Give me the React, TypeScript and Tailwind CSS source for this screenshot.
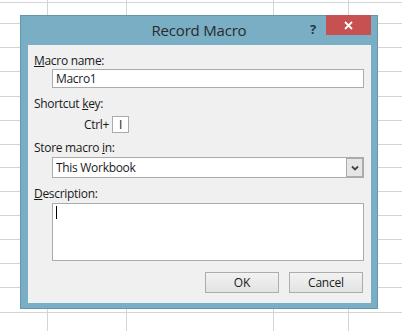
import React from 'react';

const font = { fontFamily: '"Open Sans", "Noto Sans", sans-serif' };

// sheet grid behind the dialog
const rowHeights = [3, 21, 24, 24, 25, 24, 24, 23, 24, 24, 24, 24, 24, 25, 30];
const colWidths = [48, 79, 147, 75, 60];

function SheetGrid() {
  return (
    <div className="flex flex-col">
      {rowHeights.map((h, r) => (
        <div key={r} className="flex border-b border-[#d4d4d4]" style={{ height: h }}>
          {colWidths.map((w, c) => (
            <div key={c} className="shrink-0 border-r border-[#d4d4d4]" style={{ width: w }} />
          ))}
        </div>
      ))}
    </div>
  );
}

function Label({ children }: { children: React.ReactNode }) {
  return (
    <div className="h-4 pl-[6px] text-[12px] leading-4 tracking-[-0.3px] text-[#1a1a1a]">
      {children}
    </div>
  );
}

function DialogButton({ children }: { children: React.ReactNode }) {
  return (
    <button className="flex h-[21px] w-[74px] items-center justify-center border border-[#adadad] bg-gradient-to-b from-[#f2f2f2] to-[#e3e3e3] text-[12px] tracking-[-0.2px] text-[#1a1a1a]">
      {children}
    </button>
  );
}

export default function App() {
  return (
    <div className="relative h-[331px] w-[402px] overflow-hidden bg-white" style={font}>
      <SheetGrid />

      {/* Record Macro dialog */}
      <div className="absolute left-[20px] top-[15px] flex h-[294px] w-[358px] flex-col border border-[#6497ac] bg-[#79aec4] pb-[5px]">
        <div className="relative flex h-[29px] shrink-0 items-center justify-center">
          <span className="text-[15px] tracking-[-0.2px] text-[#2b2b2b]">Record Macro</span>
          <span className="absolute left-[289px] top-[4px] text-[13px] font-bold text-[#21394a]">?</span>
          <div className="absolute left-[305px] top-[-1px] flex h-[20px] w-[45px] items-center justify-center bg-[#c75050]">
            <svg width="9" height="9" viewBox="0 0 9 9">
              <path d="M1 1 L8 8 M8 1 L1 8" stroke="white" strokeWidth="1.8" />
            </svg>
          </div>
        </div>

        <div className="ml-[7px] mr-[6px] flex h-[258px] flex-col bg-[#f0f0f0] pb-[10px] pt-[8px]">
          <Label>
            <span className="underline">M</span>acro name:
          </Label>
          <div className="ml-[24px] flex h-[19px] w-[312px] items-center border border-[#ababab] bg-white pl-[3px] text-[12px] tracking-[-0.3px] text-[#1a1a1a]">
            Macro1
          </div>

          <div className="mt-[8px]">
            <Label>
              Shortcut <span className="underline">k</span>ey:
            </Label>
          </div>
          <div className="ml-[56px] mt-[4px] flex h-[17px] items-center gap-[3px] text-[12px] tracking-[-0.3px] text-[#1a1a1a]">
            <span>Ctrl+</span>
            <div className="flex h-[17px] w-[17px] items-center justify-center border border-[#ababab] bg-white">
              I
            </div>
          </div>

          <div className="mt-[7px]">
            <Label>
              Store macro <span className="underline">i</span>n:
            </Label>
          </div>
          <div className="ml-[24px] mt-[1px] flex h-[21px] w-[312px] items-center border border-[#ababab] bg-white pl-[3px] text-[12px] tracking-[-0.3px] text-[#1a1a1a]">
            <span className="flex-1">This Workbook</span>
            <div className="flex h-[19px] w-[17px] items-center justify-center border border-[#acacac] bg-[#e6e6e6]">
              <svg width="8" height="6" viewBox="0 0 8 6">
                <path d="M1 1.5 L4 4.5 L7 1.5" fill="none" stroke="#444" strokeWidth="1.8" />
              </svg>
            </div>
          </div>

          <div className="mt-[8px]">
            <Label>
              <span className="underline">D</span>escription:
            </Label>
          </div>
          <div className="ml-[24px] mt-[1px] h-[58px] w-[312px] border border-[#ababab] bg-white pl-[3px] pt-[2px]">
            <div className="h-[13px] w-px bg-black" />
          </div>

          <div className="mt-[11px] flex justify-end gap-[10px] pr-[8px]">
            <DialogButton>OK</DialogButton>
            <DialogButton>Cancel</DialogButton>
          </div>
        </div>
      </div>
    </div>
  );
}
